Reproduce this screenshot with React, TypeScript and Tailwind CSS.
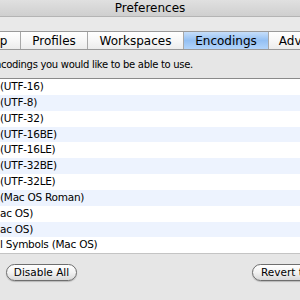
import React from "react";

const FONT = { fontFamily: '"Lucida Grande", "DejaVu Sans", sans-serif' };

const TABS = [
  { name: "Startup", width: "w-[70px]", selected: false },
  { name: "Profiles", width: "w-[67px]", selected: false },
  { name: "Workspaces", width: "w-[96px]", selected: false },
  { name: "Encodings", width: "w-[85px]", selected: true },
  { name: "Advanced", width: "w-[80px]", selected: false },
];

const ENCODINGS = [
  { hidden: "Unicode", shown: "(UTF-16)" },
  { hidden: "Unicode", shown: "(UTF-8)" },
  { hidden: "Unicode", shown: "(UTF-32)" },
  { hidden: "Unicode", shown: "(UTF-16BE)" },
  { hidden: "Unicode", shown: "(UTF-16LE)" },
  { hidden: "Unicode", shown: "(UTF-32BE)" },
  { hidden: "Unicode", shown: "(UTF-32LE)" },
  { hidden: "Western", shown: "(Mac OS Roman)" },
  { hidden: "Japanese (M", shown: "ac OS)" },
  { hidden: "Chinese (M", shown: "ac OS)" },
  { hidden: "Centra", shown: "l Symbols (Mac OS)" },
];

// Text whose start is cut off by the window's left edge
function Clipped({ hidden, shown }: { hidden: string; shown: string }) {
  return (
    <div className="flex whitespace-nowrap">
      <span className="ml-[-200px] w-[200px] shrink-0 text-right">{hidden}</span>
      <span>{shown}</span>
    </div>
  );
}

export default function App() {
  return (
    <div className="w-[300px] h-[300px] overflow-hidden bg-[#e6e6e6] text-black flex flex-col" style={FONT}>
      {/* Title bar */}
      <div className="h-[17px] shrink-0 flex items-center justify-center text-[12px] bg-gradient-to-b from-[#e0e0e0] to-[#cfcfcf] border-b border-[#b4b4b4]">
        Preferences
      </div>

      <div className="h-[14px] shrink-0 bg-[#e9e9e9]" />

      {/* Tabs */}
      <div className="h-[19px] shrink-0 flex border-y border-[#9a9a9a] bg-white">
        <div className="flex ml-[-50px]">
          {TABS.map((tab, i) => (
            <div
              key={tab.name}
              className={`${tab.width} shrink-0 flex items-center justify-center text-[12px] ${
                i > 0 ? "border-l border-[#a8a8a8]" : ""
              } ${
                tab.selected
                  ? "bg-gradient-to-b from-[#c6defa] via-[#94c0f3] to-[#b2d4fa] border-[#6f8fbf]"
                  : "bg-gradient-to-b from-white via-[#f7f7f7] to-[#ececec]"
              }`}
            >
              {tab.name}
            </div>
          ))}
        </div>
      </div>

      {/* Description */}
      <div className="h-[28px] shrink-0 flex items-center text-[10px] tracking-[-0.3px] pl-[1px]">
        <Clipped hidden="Select the en" shown="codings you would like to be able to use." />
      </div>

      {/* Encodings list */}
      <div className="shrink-0 border-t border-[#8a8a8a] border-b border-b-[#c4c4c4] bg-white">
        {ENCODINGS.map((enc, i) => (
          <div
            key={i}
            className={`h-[15.85px] flex items-center text-[10.5px] tracking-[-0.25px] ${i % 2 === 1 ? "bg-[#edf3fe]" : "bg-white"}`}
          >
            <Clipped hidden={enc.hidden} shown={enc.shown} />
          </div>
        ))}
      </div>

      {/* Buttons */}
      <div className="flex justify-between items-center pt-[10px] pl-[6px] mr-[-40px]">
        <button className="h-[17px] w-[71px] rounded-full border border-[#6e6e6e] bg-gradient-to-b from-white via-[#f2f2f2] to-[#d8d8d8] text-[10.5px] shadow-[0_1px_1px_rgba(0,0,0,0.2)]">
          Disable All
        </button>
        <button className="h-[17px] w-[88px] rounded-full border border-[#6e6e6e] bg-gradient-to-b from-white via-[#f2f2f2] to-[#d8d8d8] text-[10.5px] shadow-[0_1px_1px_rgba(0,0,0,0.2)] text-left pl-[8px] whitespace-nowrap">
          Revert to Defaults
        </button>
      </div>
    </div>
  );
}
